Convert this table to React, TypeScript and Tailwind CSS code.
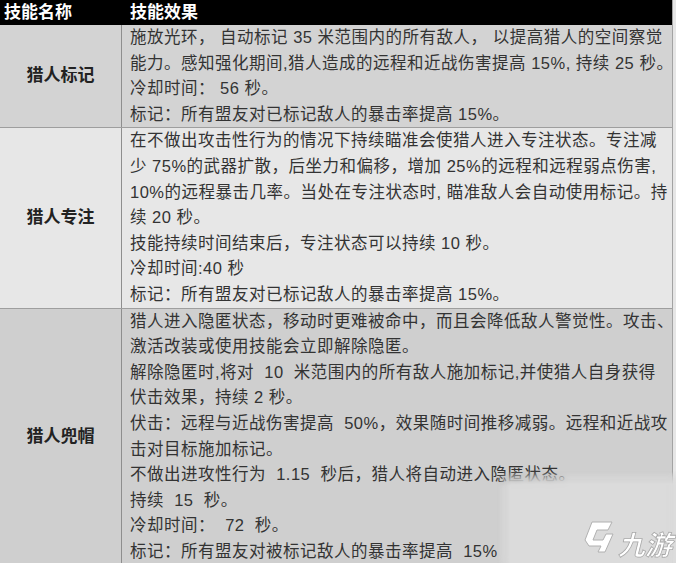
const rows = [
  {
    name: '猎人标记',
    bg: 'bg-[#d3d3d3]',
    lines: [
      '施放光环， 自动标记 35 米范围内的所有敌人， 以提高猎人的空间察觉',
      '能力。感知强化期间,猎人造成的远程和近战伤害提高 15%, 持续 25 秒。',
      '冷却时间： 56 秒。',
      '标记：所有盟友对已标记敌人的暴击率提高 15%。',
    ],
  },
  {
    name: '猎人专注',
    bg: 'bg-[#e7e7e7]',
    lines: [
      '在不做出攻击性行为的情况下持续瞄准会使猎人进入专注状态。专注减',
      '少 75%的武器扩散，后坐力和偏移，增加 25%的远程和远程弱点伤害,',
      '10%的远程暴击几率。当处在专注状态时, 瞄准敌人会自动使用标记。持',
      '续 20 秒。',
      '技能持续时间结束后，专注状态可以持续 10 秒。',
      '冷却时间:40 秒',
      '标记：所有盟友对已标记敌人的暴击率提高 15%。',
    ],
  },
  {
    name: '猎人兜帽',
    bg: 'bg-[#cfcfcf]',
    lines: [
      '猎人进入隐匿状态，移动时更难被命中，而且会降低敌人警觉性。攻击、',
      '激活改装或使用技能会立即解除隐匿。',
      '解除隐匿时,将对  10  米范围内的所有敌人施加标记,并使猎人自身获得',
      '伏击效果，持续 2 秒。',
      '伏击：远程与近战伤害提高  50%，效果随时间推移减弱。远程和近战攻',
      '击对目标施加标记。',
      '不做出进攻性行为  1.15  秒后，猎人将自动进入隐匿状态。',
      '持续  15  秒。',
      '冷却时间：  72  秒。',
      '标记：所有盟友对被标记敌人的暴击率提高  15%',
    ],
  },
];

function Watermark() {
  return (
    <div className="absolute left-[497px] top-[471px] right-0 bottom-0 bg-[#dbdbdb]/90 backdrop-blur-[3px] [mask-image:linear-gradient(to_right,transparent,black_14px),linear-gradient(to_bottom,transparent,black_14px)] [mask-composite:intersect]">
      <div className="absolute right-[4px] bottom-[3px] flex items-end gap-[3px]">
        <svg width="32" height="40" viewBox="0 0 32 40">
          <path
            d="M9 2 L29 2 L25 10 L14 10 L10 20 L20 20 L23 14 L30 14 L22 32 L15 32 L18 26 L6 26 L2 20 Z"
            fill="#ffffff"
            stroke="#b0b0b0"
            strokeWidth="1"
            strokeLinejoin="round"
          />
        </svg>
        <span className="text-[27px] leading-none font-bold italic text-white [-webkit-text-stroke:0.8px_#a8a8a8] mb-[3px] [font-family:'Noto_Sans_CJK_SC',sans-serif]">
          九游
        </span>
      </div>
    </div>
  );
}

export default function App() {
  return (
    <div className="relative w-[676px] h-[563px] overflow-hidden bg-[#e6e6e6] [font-family:'Liberation_Sans','Noto_Sans_CJK_SC',sans-serif]">
      <div className="w-[673px] border-r border-[#a3a3a3]">
        <div className="grid grid-cols-[122px_1fr] h-[25px] bg-black text-white text-[17px] font-bold leading-[25px]">
          <div className="pl-[4px]">技能名称</div>
          <div className="pl-[8px]">技能效果</div>
        </div>
        {rows.map((r) => (
          <div key={r.name} className={`grid grid-cols-[122px_1fr] border-b border-[#9e9e9e] ${r.bg}`}>
            <div className="flex items-center justify-center border-r border-[#8e8e8e] text-[17px] font-bold text-[#222]">
              {r.name}
            </div>
            <div className="pl-[8px] text-[16.5px] leading-[25.6px] text-[#333] tracking-[0.5px] overflow-hidden">
              {r.lines.map((l, i) => (
                <div key={i} className="whitespace-pre">
                  {l}
                </div>
              ))}
            </div>
          </div>
        ))}
      </div>
      <Watermark />
    </div>
  );
}
